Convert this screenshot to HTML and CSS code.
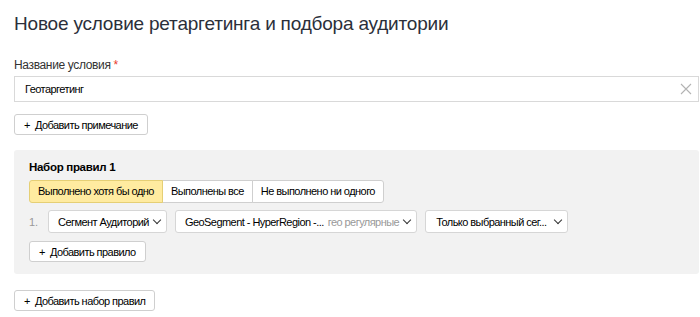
FILE: index.html
```html
<!DOCTYPE html>
<html>
<head>
    <title>Условие ретаргетинга</title>
    <link rel="stylesheet" href="styles.css">
</head>
<body>
    <div class="page">
        <h1 class="title">Новое условие ретаргетинга и подбора аудитории</h1>

        <label class="field-label">Название условия <span class="req">*</span></label>
        <div class="text-input">
            <span class="value">Геотаргетинг</span>
            <svg class="clear" width="12" height="12" viewBox="0 0 12 12"><path d="M1 1L11 11M11 1L1 11" stroke="#b3b3b3" stroke-width="1.1" fill="none"/></svg>
        </div>

        <button class="btn">+&nbsp; Добавить примечание</button>

        <div class="ruleset">
            <div class="ruleset-title">Набор правил 1</div>
            <div class="tabs">
                <div class="tab active">Выполнено хотя бы одно</div>
                <div class="tab">Выполнены все</div>
                <div class="tab">Не выполнено ни одного</div>
            </div>
            <div class="rule">
                <span class="num">1.</span>
                <div class="select s1">Сегмент Аудиторий <span class="arrow"></span></div>
                <div class="select s2"><span>GeoSegment - HyperRegion -...</span> <span class="muted">гео регулярные</span> <span class="arrow"></span></div>
                <div class="select s3"><span>Только выбранный сег...</span> <span class="arrow"></span></div>
            </div>
            <button class="btn">+&nbsp; Добавить правило</button>
        </div>

        <button class="btn">+&nbsp; Добавить набор правил</button>
    </div>
</body>
</html>
```

FILE: styles.css
```css
body { margin: 0; font-family: "Liberation Sans", Arial, sans-serif; color: #000; background: #fff; }

.page {
    padding: 11px 1px 0 14px;
    display: flex;
    flex-direction: column;
    align-items: flex-start;
}

.title {
    font-size: 19px;
    letter-spacing: -0.2px;
    font-weight: normal;
    color: #2b2f3a;
    margin: 1px 0 22px 0;
    line-height: 24px;
}

.field-label {
    font-size: 12px;
    letter-spacing: -0.35px;
    color: #333;
    margin-bottom: 4px;
}

.req { color: #e8402d; }

.text-input {
    align-self: stretch;
    height: 24px;
    border: 1px solid #d9d9d9;
    display: flex;
    align-items: center;
    justify-content: space-between;
    padding: 0 6px 0 10px;
    font-size: 11px;
    letter-spacing: -0.55px;
    margin-bottom: 12px;
}

.btn {
    font-family: inherit;
    font-size: 11px;
    letter-spacing: -0.55px;
    color: #000;
    background: #fff;
    border: 1px solid #cfcfcf;
    border-radius: 3px;
    height: 21px;
    padding: 0 9px;
    cursor: pointer;
}

.ruleset {
    align-self: stretch;
    background: #f2f2f2;
    border-radius: 3px;
    margin: 15px 0 16px 0;
    padding: 11px 15px 12px 15px;
    display: flex;
    flex-direction: column;
    align-items: flex-start;
}

.ruleset-title {
    font-size: 11.5px;
    letter-spacing: -0.3px;
    font-weight: bold;
    margin-bottom: 7px;
}

.tabs {
    display: flex;
    margin-bottom: 7px;
}

.tab {
    font-size: 11px;
    letter-spacing: -0.55px;
    height: 21px;
    line-height: 21px;
    padding: 0 8px;
    background: #fff;
    border: 1px solid #cfcfcf;
    margin-left: -1px;
}

.tab:first-child { margin-left: 0; border-radius: 3px 0 0 3px; }
.tab:last-child { border-radius: 0 3px 3px 0; }

.tab.active {
    background: #ffeba0;
    border-color: #e5cf75;
    position: relative;
}

.rule {
    display: flex;
    align-items: center;
    gap: 8px;
    margin-bottom: 8px;
}

.num {
    font-size: 11px;
    color: #999;
    width: 11px;
}

.select {
    font-size: 11px;
    letter-spacing: -0.55px;
    height: 21px;
    display: flex;
    align-items: center;
    gap: 2px;
    background: #fff;
    border: 1px solid #d6d6d6;
    border-radius: 3px;
    padding: 0 4px 0 9px;
    white-space: nowrap;
}

.s3 { padding-left: 10px; }
.s3 .arrow { margin-left: 7px; }

.muted { color: #999; margin-left: 2px; }

.arrow {
    width: 5px;
    height: 5px;
    border-right: 1px solid #333;
    border-bottom: 1px solid #333;
    transform: rotate(45deg);
    margin: -3px 2px 0 3px;
}
```
